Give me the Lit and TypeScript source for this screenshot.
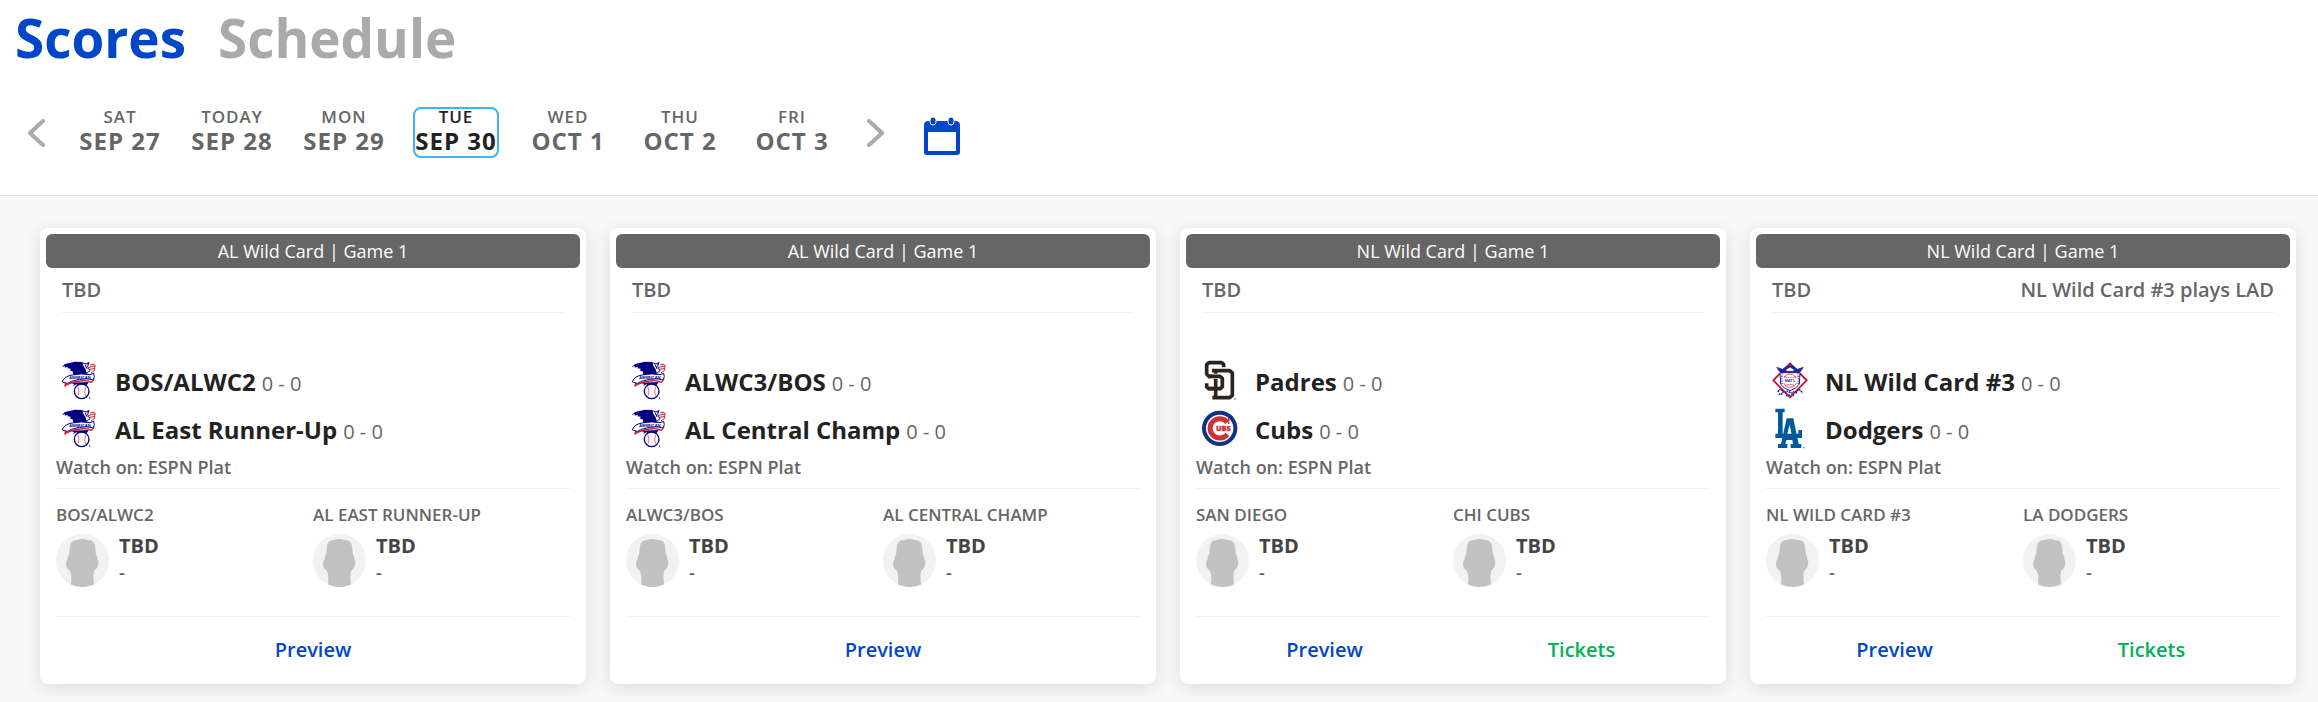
import { LitElement, html, css, svg, nothing } from "lit";
import { customElement, property, state } from "lit/decorators.js";
import { classMap } from "lit/directives/class-map.js";

type LogoName = "al" | "nl" | "sd" | "chc" | "la";

interface Team {
  name: string;
  label: string;
  logo: LogoName;
  record: string;
}

interface Game {
  title: string;
  note?: string;
  away: Team;
  home: Team;
  tickets?: boolean;
}

const team = (name: string, label: string, logo: LogoName): Team => ({ name, label, logo, record: "0 - 0" });

const GAMES: Game[] = [
  {
    title: "AL Wild Card | Game 1",
    away: team("BOS/ALWC2", "BOS/ALWC2", "al"),
    home: team("AL East Runner-Up", "AL EAST RUNNER-UP", "al"),
  },
  {
    title: "AL Wild Card | Game 1",
    away: team("ALWC3/BOS", "ALWC3/BOS", "al"),
    home: team("AL Central Champ", "AL CENTRAL CHAMP", "al"),
  },
  {
    title: "NL Wild Card | Game 1",
    away: team("Padres", "SAN DIEGO", "sd"),
    home: team("Cubs", "CHI CUBS", "chc"),
    tickets: true,
  },
  {
    title: "NL Wild Card | Game 1",
    note: "NL Wild Card #3 plays LAD",
    away: team("NL Wild Card #3", "NL WILD CARD #3", "nl"),
    home: team("Dodgers", "LA DODGERS", "la"),
    tickets: true,
  },
];

const DAYS = [
  ["SAT", "SEP 27"],
  ["TODAY", "SEP 28"],
  ["MON", "SEP 29"],
  ["TUE", "SEP 30"],
  ["WED", "OCT 1"],
  ["THU", "OCT 2"],
  ["FRI", "OCT 3"],
];

const LOGOS = {
  al: svg`
    <g stroke-linejoin="round" stroke-linecap="round">
      <path fill="#fff" stroke="#00007c" stroke-width="3" d="M78 20 L90 24 L98 20 L95 32 L102 44 L92 52 L84 40Z"/>
      <path fill="none" stroke="#00007c" stroke-width="3" d="M88 27 L93 38 M94 24 L100 21"/>
      <path fill="none" stroke="#d3172e" stroke-width="3" d="M98 34 L116 30 M104 26 L114 25 L117 29 L115 44 L106 50 M102 40 L113 38"/>
      <path fill="#000083" d="M17 34 L27 24 L44 20 L56 17 L78 18 L81 28 L90 42 L92 54 L52 56 L50 46 L42 44 L44 38 L34 37 L36 32 L26 35 L27 30Z"/>
      <path fill="#000083" d="M45 80 L98 78 L92 88 L84 84 L78 92 L71 84 L64 91 L62 84 L52 90 L54 84Z"/>
      <circle cx="77" cy="106" r="22" fill="#fff" stroke="#000083" stroke-width="4"/>
      <path fill="none" stroke="#e8606c" stroke-width="3" stroke-dasharray="3 3" d="M65 92 Q72 106 65 121 M90 92 Q83 106 90 121"/>
      <path fill="#fff" stroke="#000083" stroke-width="3" d="M19 76 Q25 61 48 57 Q76 51 102 56 L113 52 Q117 62 112 72 Q95 66 70 70 Q44 75 34 82Z"/>
      <path fill="none" stroke="#d3172e" stroke-width="4" d="M27 90 L29 80 M27 90 Q45 78 72 75 Q92 71 106 79 L113 71"/>
    </g>
    <text x="72" y="69" font-size="12" font-weight="700" fill="#000083" text-anchor="middle">AMERICAN</text>
    <circle cx="101" cy="126" r="2" fill="#000083"/>`,
  nl: svg`
    <path d="M72 22 L122 73 L72 124 L22 73Z" fill="#fff" stroke="#d0021b" stroke-width="5"/>
    <g stroke="#22229a" stroke-width="3" stroke-linejoin="round" fill="#fff">
      <path d="M42 50 H102 L100 84 Q92 98 72 104 Q52 98 44 84Z"/>
      <path fill="#22229a" stroke-width="2" d="M32 34 L50 40 L60 32 L72 28 L84 32 L94 40 L112 34 L104 46 L96 52 L90 49 H54 L48 52 L40 46Z"/>
      <path stroke-width="2" d="M58 42 L72 33 L86 42 L80 46 L64 46Z"/>
      <path fill="none" stroke-dasharray="2 3" stroke-width="5" d="M48 56 V84 M97 56 V84"/>
    </g>
    <circle cx="72" cy="74" r="20" fill="#fff" stroke="#e0505c" stroke-width="3"/>
    <path d="M56 62 Q72 70 88 62 M58 90 Q72 80 86 90" fill="none" stroke="#d0021b" stroke-width="3" stroke-dasharray="3 2"/>
    <rect x="50" y="66" width="44" height="15" fill="#fff"/>
    <text x="72" y="78" font-size="11" font-weight="700" fill="#22229a" text-anchor="middle">NAT'L</text>
    <path d="M36 108 Q40 96 50 104 M38 114 Q48 118 52 106 M58 112 Q60 102 70 108 T84 106 M90 112 Q96 96 104 104 L110 112 M60 118 H84" fill="none" stroke="#22229a" stroke-width="5" stroke-dasharray="5 2"/>
    <path d="M62 110 L72 122 L82 110" fill="none" stroke="#e0505c" stroke-width="2"/>`,
  sd: svg`
    <g fill="none" stroke-linejoin="round">
      <path stroke="#2f241d" stroke-width="11" d="M83 34 V25 L77 20 H39 L32 26 V54 L39 61 H72 L79 67 V92 L73 98 H37 L32 92 V82"/>
      <path stroke="#fff" stroke-width="17" d="M50 44 H101 L109 51 V118 L101 125 H52 M59 50 V125"/>
      <path stroke="#2f241d" stroke-width="11" d="M48 44 H101 L109 51 V118 L101 125 H49 M59 40 V129"/>
      <path stroke="#fff" stroke-width="15" d="M50 61 H72 L79 67 V92 L73 98 H66"/>
      <path stroke="#2f241d" stroke-width="11" d="M36 61 H72 L79 67 V92 L73 98 H36"/>
    </g>
    <circle cx="117" cy="129" r="2" fill="#2f241d"/>`,
  chc: svg`
    <circle cx="71" cy="217" r="53" fill="#0e3386"/>
    <circle cx="71" cy="217" r="41" fill="#fff"/>
    <path d="M94 199 A29 29 0 1 0 94 235" fill="none" stroke="#cc3433" stroke-width="15"/>
    <path d="M98 186 V204" stroke="#cc3433" stroke-width="4"/>
    <rect x="57" y="206" width="52" height="23" fill="#fff"/>
    <text x="82" y="225" font-size="22" font-weight="800" fill="#cc3433" stroke="#cc3433" text-anchor="middle">UBS</text>`,
  la: svg`
    <path fill="#005a9c" d="M28 158 H56 V169 H50 V234 H36 V169 H28Z"/>
    <path fill="#fff" d="M58 184 H86 L102 264 H40 L50 234Z"/>
    <path fill="#005a9c" fill-rule="evenodd" d="M62 187 H82 L98 264 H106 V276 H74 V264 H81 L79 252 H61 L58 264 H64 V276 H36 V264 H45Z M71 206 L63 236 H77Z"/>
    <path fill="#005a9c" d="M28 233 H97 V222 H108 V246 H28Z"/>
    <circle cx="114" cy="275" r="2" fill="#005a9c"/>`,
};

const ORIGINS: Record<LogoName, string> = {
  al: "18 18 114 114",
  nl: "18 18 114 114",
  sd: "18 18 114 114",
  chc: "18 162 114 114",
  la: "18 162 114 114",
};

@customElement("team-logo")
class TeamLogo extends LitElement {
  @property() name: LogoName = "al";

  static styles = css`
    :host {
      display: block;
      flex: none;
      width: 38px;
      height: 38px;
    }
    svg {
      display: block;
      width: 100%;
      height: 100%;
      overflow: visible;
      font-family: "Open Sans", sans-serif;
    }
  `;

  render() {
    return html`<svg viewBox=${ORIGINS[this.name]} aria-hidden="true">${LOGOS[this.name]}</svg>`;
  }
}

@customElement("game-card")
class GameCard extends LitElement {
  @property({ attribute: false }) game!: Game;

  static styles = css`
    :host {
      display: block;
      min-width: 0;
    }
    .card {
      box-sizing: border-box;
      height: 100%;
      padding: 6px 6px 0;
      border-radius: 8px;
      background: #fff;
      box-shadow: 0 4px 18px rgba(0, 0, 0, 0.11);
    }
    .title {
      margin: 0;
      border-radius: 6px;
      background: #666;
      color: #fff;
      font-size: 18px;
      font-weight: 400;
      line-height: 34px;
      text-align: center;
    }
    .status {
      display: flex;
      justify-content: space-between;
      margin: 0 16px;
      border-bottom: 1px solid #f2f2f2;
      font-size: 20px;
      font-weight: 600;
      line-height: 44px;
      color: #666;
    }
    .teams {
      margin: 44px 16px 0;
    }
    .team {
      display: flex;
      align-items: center;
      gap: 15px;
      height: 48px;
    }
    .who {
      padding-top: 4px;
      line-height: 44px;
      white-space: nowrap;
    }
    .name {
      font-size: 24px;
      font-weight: 700;
      color: #222;
    }
    .record {
      margin-left: 6px;
      font-size: 20px;
      color: #666;
    }
    .watch {
      margin: 0 10px;
      padding-bottom: 7px;
      border-bottom: 1px solid #f2f2f2;
      font-size: 18px;
      font-weight: 600;
      line-height: 28px;
      color: #666;
    }
    .pitchers {
      display: grid;
      grid-template-columns: 1fr 1fr;
      margin: 0 10px;
      padding: 14px 0 29px;
      border-bottom: 1px solid #f2f2f2;
    }
    .label {
      font-size: 17px;
      font-weight: 600;
      line-height: 24px;
      color: #666;
    }
    .pitcher {
      display: flex;
      gap: 10px;
      margin-top: 7px;
    }
    .avatar {
      flex: none;
      width: 53px;
      height: 53px;
      border-radius: 50%;
      background: #f2f2f2;
    }
    .player {
      font-size: 20px;
      font-weight: 700;
      line-height: 24px;
      color: #444;
    }
    .line {
      font-size: 18px;
      font-weight: 600;
      line-height: 28px;
      color: #666;
    }
    .actions {
      display: flex;
      margin: 0 10px;
      padding-bottom: 1px;
      font-size: 20px;
      font-weight: 600;
      line-height: 66px;
    }
    .action {
      flex: 1;
      color: #0047c8;
      text-align: center;
      text-decoration: none;
    }
    .buy {
      color: #00b25a;
    }
  `;

  private team(t: Team) {
    return html`
      <div class="team">
        <team-logo .name=${t.logo}></team-logo>
        <div class="who"><span class="name">${t.name}</span><span class="record">${t.record}</span></div>
      </div>
    `;
  }

  private pitcher(t: Team) {
    return html`
      <div>
        <div class="label">${t.label}</div>
        <div class="pitcher">
          <svg class="avatar" viewBox="0 0 53 53" aria-hidden="true">
            <path
              fill="#c2c2c2"
              d="M14 12 Q15 6 21 6 Q26 4 32 6 Q38 6 39 12 L40 21 Q42 22 41 25 Q43 26 42 30 Q42 34 38 37 Q37 42 38 50 L40 53 H13 L15 50 Q16 42 14 37 Q10 34 10 30 Q10 26 12 25 Q11 22 13 21Z"
            />
          </svg>
          <div>
            <div class="player">TBD</div>
            <div class="line">-</div>
          </div>
        </div>
      </div>
    `;
  }

  render() {
    const g = this.game;
    return html`
      <article class="card">
        <h2 class="title">${g.title}</h2>
        <div class="status"><span>TBD</span>${g.note ? html`<span>${g.note}</span>` : nothing}</div>
        <div class="teams">${this.team(g.away)}${this.team(g.home)}</div>
        <div class="watch">Watch on: ESPN Plat</div>
        <div class="pitchers">${this.pitcher(g.away)}${this.pitcher(g.home)}</div>
        <div class="actions">
          <a class="action" href="#preview">Preview</a>
          ${g.tickets ? html`<a class="action buy" href="#tickets">Tickets</a>` : nothing}
        </div>
      </article>
    `;
  }
}

@customElement("app-root")
class AppRoot extends LitElement {
  @state() private selected = 3;

  static styles = css`
    :host {
      display: block;
      min-height: 100vh;
      background: #f8f8f8;
      font-family: "Open Sans", "Noto Sans", sans-serif;
    }
    .top {
      padding: 6px 15px 37px;
      border-bottom: 1px solid #ddd;
      background: #fff;
    }
    .tabs {
      display: flex;
      gap: 32px;
      font-size: 53px;
      font-weight: 700;
      line-height: 64px;
    }
    .tab {
      color: #aaa;
      text-decoration: none;
    }
    .tab.current {
      color: #0047c8;
    }
    .dates {
      display: flex;
      align-items: center;
      gap: 32px;
      margin-top: 37px;
      padding-left: 13px;
    }
    .days {
      display: flex;
      gap: 26px;
    }
    button {
      margin: 0;
      padding: 0;
      border: 0;
      background: none;
      font-family: inherit;
      cursor: pointer;
    }
    button svg {
      display: block;
    }
    .day {
      display: flex;
      flex-direction: column;
      align-items: center;
      box-sizing: border-box;
      width: 86px;
      border: 2px solid transparent;
      border-radius: 8px;
      color: #666;
      letter-spacing: 1px;
      white-space: nowrap;
    }
    .day.selected {
      border-color: #41b1f8;
      color: #222;
    }
    .weekday {
      font-size: 17px;
      font-weight: 600;
      line-height: 16px;
    }
    .date {
      font-size: 24px;
      font-weight: 700;
      line-height: 31px;
    }
    .calendar {
      margin-left: 8px;
      padding-top: 7px;
    }
    .games {
      display: grid;
      grid-template-columns: repeat(4, minmax(0, 1fr));
      gap: 24px;
      padding: 32px 22px 17px 40px;
    }
  `;

  private arrow(path: string, label: string) {
    return html`
      <button aria-label=${label}>
        <svg width="17" height="28" viewBox="0 0 17 28" fill="none" stroke="#aaa" stroke-width="4" stroke-linecap="round">
          <path d=${path} />
        </svg>
      </button>
    `;
  }

  render() {
    return html`
      <header class="top">
        <nav class="tabs">
          <a class="tab current" href="#scores">Scores</a>
          <a class="tab" href="#schedule">Schedule</a>
        </nav>
        <div class="dates">
          ${this.arrow("M15 2 L2 14 L15 26", "Previous days")}
          <div class="days">
            ${DAYS.map(
              ([weekday, date], i) => html`
                <button
                  class=${classMap({ day: true, selected: i === this.selected })}
                  aria-pressed=${i === this.selected}
                  @click=${() => (this.selected = i)}
                >
                  <span class="weekday">${weekday}</span>
                  <span class="date">${date}</span>
                </button>
              `
            )}
          </div>
          ${this.arrow("M2 2 L15 14 L2 26", "Next days")}
          <button class="calendar" aria-label="Choose a date">
            <svg width="36" height="38" viewBox="0 0 36 38">
              <path
                fill="#0047c8"
                fill-rule="evenodd"
                d="M3 4 H33 Q36 5 36 8 V35 Q36 38 33 38 H3 Q0 38 0 35 V8 Q0 5 3 4Z M4 15 V34 H32 V15Z"
              />
              <g fill="#0047c8" stroke="#fff" stroke-width="1">
                <rect x="6" y="0" width="6" height="8" rx="3" />
                <rect x="24" y="0" width="6" height="8" rx="3" />
              </g>
            </svg>
          </button>
        </div>
      </header>
      <main class="games">${GAMES.map((g) => html`<game-card .game=${g}></game-card>`)}</main>
    `;
  }
}
